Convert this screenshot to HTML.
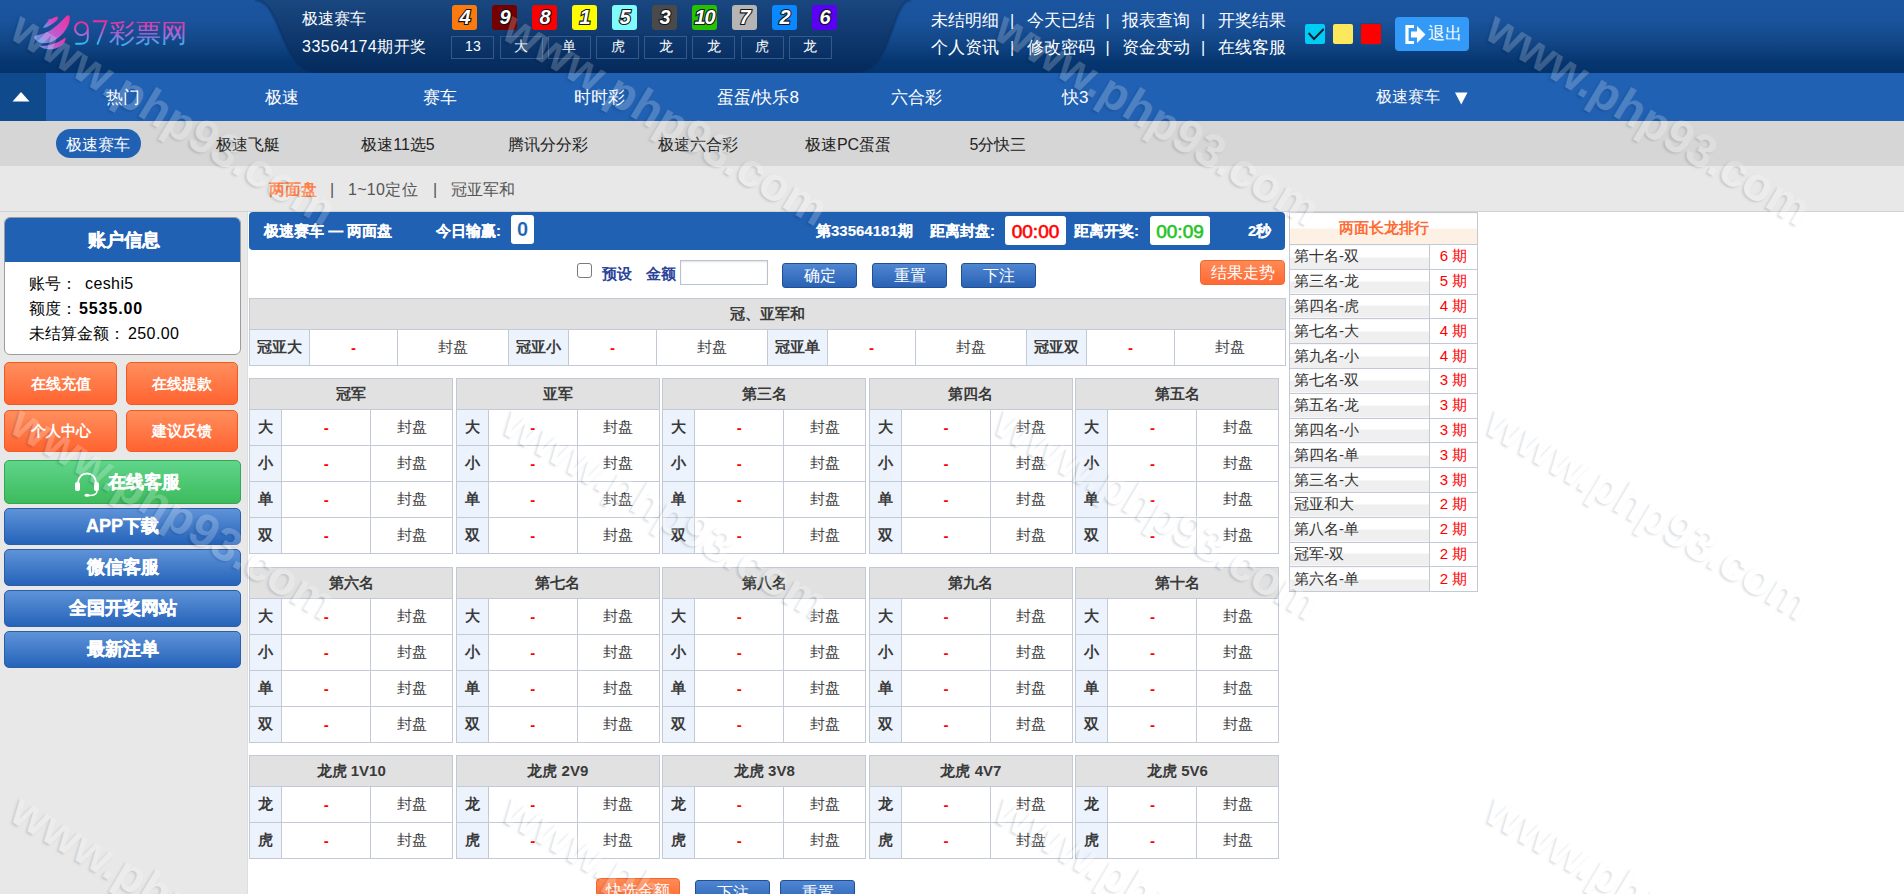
<!DOCTYPE html><html><head><meta charset="utf-8"><title>97彩票网</title><style>
*{margin:0;padding:0;box-sizing:border-box}
html,body{width:1904px;height:894px;overflow:hidden;background:#fff;font-family:"Liberation Sans",sans-serif;}
.ab{position:absolute;white-space:nowrap}
.hdr{position:absolute;left:0;top:0;width:1904px;height:73px}
.ball{position:absolute;top:5px;width:25px;height:25px;border-radius:3px;color:#fff;font:italic bold 20px/25px "Liberation Sans",sans-serif;text-align:center;
 -webkit-text-stroke:2.2px #151515;paint-order:stroke fill;text-shadow:0 0 1px rgba(0,0,0,.5);letter-spacing:-1px}
.rbox{position:absolute;top:36px;width:43px;height:23px;border:1px solid #35598a;color:#fff;font-size:14px;line-height:19px;text-align:center}
.lnk{position:absolute;color:#fff;font-size:16px;line-height:20px}
.nav{position:absolute;left:0;top:73px;width:1904px;height:48px;background:#2161b3}
.navi{position:absolute;top:0;height:48px;line-height:49px;color:#fff;font-size:17px;text-align:center;width:160px}
.sub{position:absolute;left:0;top:121px;width:1904px;height:45px;background:#d6d6d6}
.subi{position:absolute;top:0;height:45px;line-height:47px;color:#222;font-size:16px;text-align:center;width:150px}
.tabs{position:absolute;left:0;top:166px;width:1904px;height:46px;background:#e8e8e8;border-bottom:1px solid #d2d2d2}
.lcol{position:absolute;left:0;top:212px;width:248px;height:682px;background:#e8e8e8;border-right:1px solid #dedede}
.obtn{position:absolute;width:112px;height:42px;border-radius:5px;border:1px solid #f45a20;background:linear-gradient(#ff8f5e,#ff6330);color:#fff;font-weight:bold;font-size:15px;line-height:40px;text-align:center}
.bbtn{position:absolute;left:4px;width:237px;height:37px;border-radius:5px;border:1px solid #2a5ea8;background:linear-gradient(#5e93d8,#2563b9);color:#fff;font-weight:bold;font-size:18px;line-height:35px;text-align:center;-webkit-text-stroke:.4px #fff}
table{border-collapse:collapse;table-layout:fixed}
.bt td,.bt th{border:1px solid #c3cad5;text-align:center;font-size:15px;color:#3a3a3a}
.bt th{background:#e1e1e1;height:31px;font-weight:bold;-webkit-text-stroke:0}
.bt td{height:36px;background:#fff}
.bt td.l{background:#edf3fc;font-weight:bold;-webkit-text-stroke:0}
.bt td.o{color:#f00;font-weight:bold}
.sbtn{position:absolute;height:25px;border-radius:3px;border:1px solid #1f4f95;background:linear-gradient(#4f86d2,#2a62b4);color:#fff;font-size:16px;line-height:23px;text-align:center}
.wm{position:absolute;font:bold 47px/1 "Liberation Sans",sans-serif;color:#fff;opacity:.2;text-shadow:-1px 2px 2px rgba(0,0,0,.6);transform-origin:0 0;transform:rotate(31deg);white-space:nowrap;pointer-events:none}
</style></head><body>
<svg class="hdr" width="1904" height="73" viewBox="0 0 1904 73">
<defs>
<linearGradient id="hg" x1="0" y1="0" x2="0" y2="1"><stop offset="0" stop-color="#1b559f"/><stop offset=".28" stop-color="#1a539c"/><stop offset=".55" stop-color="#134889"/><stop offset=".85" stop-color="#063670"/><stop offset="1" stop-color="#04336c"/></linearGradient>
<linearGradient id="dg" x1="0" y1="0" x2="0" y2="1"><stop offset="0" stop-color="#1a4780"/><stop offset="1" stop-color="#042a5c"/></linearGradient>
<linearGradient id="lg" x1="0" y1="1" x2="1" y2="0"><stop offset="0" stop-color="#2fb6f5"/><stop offset=".5" stop-color="#b866d8"/><stop offset="1" stop-color="#f0309a"/></linearGradient>
<linearGradient id="tg" x1="0" y1="0" x2="0" y2="1" gradientUnits="objectBoundingBox"><stop offset="0" stop-color="#ee2c98"/><stop offset=".5" stop-color="#b060d0"/><stop offset="1" stop-color="#2cbdf8"/></linearGradient>
<linearGradient id="sg" x1="0" y1="1" x2="1" y2="0"><stop offset="0" stop-color="#4aa6f0"/><stop offset=".45" stop-color="#c05ad0"/><stop offset="1" stop-color="#f52d9b"/></linearGradient>
</defs>
<rect width="1904" height="73" fill="url(#hg)"/>
<path d="M255 0 C282 0 280 73 318 73 L856 73 C893 73 891 0 911 0 Z" fill="url(#dg)"/>
<path d="M255 0 C282 0 280 73 318 73" fill="none" stroke="#0a2e60" stroke-opacity=".35" stroke-width="3"/>
<path d="M856 73 C893 73 891 0 911 0" fill="none" stroke="#0a2e60" stroke-opacity=".35" stroke-width="3"/>
<g>
<path d="M34 37 C36 44 48 46 58 38 C66 32 71 22 69.5 16 C69 14.5 67 15.5 65 17.5 C58 25 50 32 42 34 C38 35 35 35.5 34 37 Z" fill="url(#sg)"/>
<path d="M43 28 C46 22 53 17 57 16.5 C59 17 58 20 55 22 C51 25 46 28 43 28 Z M47 20.5 L50.5 18.5 L50 21 Z" fill="url(#sg)"/>
<path d="M39 45.5 C44 50.5 55 51 62 45 C65 42 66 39 65.5 37.5 C60 42 52 45 45 45.7 C42 46 40 45.8 39 45.5 Z" fill="url(#sg)"/>
</g>
<g fill="none" stroke="url(#tg)" stroke-width="1.9" stroke-linecap="round">
<path d="M87.8 29 A6.4 6.4 0 1 1 87.8 28.2 L87.8 37.5 C87.8 41.5 85 43.8 81 43.8 L76 43.8"/>
<path d="M93.8 21.3 L106.3 21.3 L97.6 43.8"/>
</g>
<text x="108.5" y="42" font-family="Liberation Sans" font-size="25.5" fill="url(#tg)" style="font-weight:300">彩票网</text>
</svg>
<div class="lnk" style="left:302px;top:9px">极速赛车</div>
<div class="lnk" style="left:302px;top:37px;letter-spacing:.5px">33564174期开奖</div>
<div class="ball" style="left:452px;background:#fb7a10">4</div>
<div class="ball" style="left:492px;background:#740000">9</div>
<div class="ball" style="left:532px;background:#fc0000">8</div>
<div class="ball" style="left:572px;background:#fdfd00">1</div>
<div class="ball" style="left:612px;background:#80fbfb">5</div>
<div class="ball" style="left:652px;background:#4a4a4a">3</div>
<div class="ball" style="left:692px;background:#25c200">10</div>
<div class="ball" style="left:732px;background:#b5b5b5">7</div>
<div class="ball" style="left:772px;background:#0a88ff">2</div>
<div class="ball" style="left:812px;background:#5a00f5">6</div>
<div class="rbox" style="left:451.4px">13</div>
<div class="rbox" style="left:499.6px">大</div>
<div class="rbox" style="left:547.8px">单</div>
<div class="rbox" style="left:596.0px">虎</div>
<div class="rbox" style="left:644.2px">龙</div>
<div class="rbox" style="left:692.4px">龙</div>
<div class="rbox" style="left:740.6px">虎</div>
<div class="rbox" style="left:788.8px">龙</div>
<div class="lnk" style="left:931.0px;top:11px;font-size:17px">未结明细</div>
<div class="lnk" style="left:1010.0px;top:11px">|</div>
<div class="lnk" style="left:1026.5px;top:11px;font-size:17px">今天已结</div>
<div class="lnk" style="left:1105.5px;top:11px">|</div>
<div class="lnk" style="left:1122.0px;top:11px;font-size:17px">报表查询</div>
<div class="lnk" style="left:1201.0px;top:11px">|</div>
<div class="lnk" style="left:1217.5px;top:11px;font-size:17px">开奖结果</div>
<div class="lnk" style="left:931.0px;top:38px;font-size:17px">个人资讯</div>
<div class="lnk" style="left:1010.0px;top:38px">|</div>
<div class="lnk" style="left:1026.5px;top:38px;font-size:17px">修改密码</div>
<div class="lnk" style="left:1105.5px;top:38px">|</div>
<div class="lnk" style="left:1122.0px;top:38px;font-size:17px">资金变动</div>
<div class="lnk" style="left:1201.0px;top:38px">|</div>
<div class="lnk" style="left:1217.5px;top:38px;font-size:17px">在线客服</div>
<div class="ab" style="left:1305px;top:24px;width:20px;height:20px;background:#00cdf6;border-radius:2px"><svg width="20" height="20" viewBox="0 0 20 20"><path d="M3.6 9 L9 15 L18.7 5" fill="none" stroke="#0d1d2c" stroke-width="1.9"/></svg></div>
<div class="ab" style="left:1333px;top:24px;width:20px;height:20px;background:#fbe85c;border-radius:2px"></div>
<div class="ab" style="left:1361px;top:24px;width:20px;height:20px;background:#fe0000;border-radius:2px;box-shadow:0 0 0 1px #23467a"></div>
<div class="ab" style="left:1395px;top:17px;width:74px;height:34px;background:#339bf7;border-radius:4px"><svg style="position:absolute;left:10px;top:8px" width="22" height="19" viewBox="0 0 22 19"><path d="M9 1.5 H2 V17.5 H9" fill="none" stroke="#fff" stroke-width="3.2"/><path d="M6 6.5 H12 V1 L20.5 9.5 L12 18 V12.5 H6 Z" fill="#fff"/></svg><div class="lnk" style="left:33px;top:7px;font-size:17px">退出</div></div>
<div class="nav"><div class="ab" style="left:0;top:0;width:46px;height:48px;background:#0f4a8c"></div>
<svg class="ab" style="left:12px;top:19px" width="18" height="10" viewBox="0 0 18 10"><path d="M9 0 L17.5 9.5 L0.5 9.5 Z" fill="#fff"/></svg>
<div class="navi" style="left:42.8px">热门</div>
<div class="navi" style="left:201.6px">极速</div>
<div class="navi" style="left:360.3px">赛车</div>
<div class="navi" style="left:519.0px">时时彩</div>
<div class="navi" style="left:677.8px">蛋蛋/快乐8</div>
<div class="navi" style="left:836.5px">六合彩</div>
<div class="navi" style="left:995.3px">快3</div>
<div class="lnk" style="left:1376px;top:14px">极速赛车</div><svg class="ab" style="left:1455px;top:19px" width="13" height="13" viewBox="0 0 13 13"><path d="M0 0.5 H12.5 L6.25 12.5 Z" fill="#fff"/></svg>
</div>
<div class="sub">
<div class="ab" style="left:56px;top:8px;width:85px;height:29px;border-radius:15px;background:#2161b3"></div>
<div class="subi" style="left:23px;color:#fff">极速赛车</div>
<div class="subi" style="left:173px;color:#222">极速飞艇</div>
<div class="subi" style="left:323px;color:#222">极速11选5</div>
<div class="subi" style="left:473px;color:#222">腾讯分分彩</div>
<div class="subi" style="left:623px;color:#222">极速六合彩</div>
<div class="subi" style="left:773px;color:#222">极速PC蛋蛋</div>
<div class="subi" style="left:923px;color:#222">5分快三</div>
</div>
<div class="tabs">
<div class="lnk" style="left:269px;top:14px;color:#fd7d45;font-weight:bold">两面盘</div>
<div class="lnk" style="left:330px;top:14px;color:#555">|</div>
<div class="lnk" style="left:348px;top:14px;color:#555;letter-spacing:.3px">1~10定位</div>
<div class="lnk" style="left:433px;top:14px;color:#555">|</div>
<div class="lnk" style="left:451px;top:14px;color:#555">冠亚军和</div>
</div>
<div class="lcol"></div>
<div class="ab" style="left:4px;top:217px;width:237px;height:138px;border:1px solid #9c9c9c;border-radius:6px;background:#fff;overflow:hidden">
<div class="ab" style="left:0;top:0;width:237px;height:44px;background:#2161b3;color:#fff;font-weight:bold;font-size:18px;line-height:44px;text-align:center;-webkit-text-stroke:.4px #fff">账户信息</div>
<div class="lnk" style="left:24px;top:56px;color:#000">账号：</div><div class="lnk" style="left:80px;top:56px;color:#000;letter-spacing:.4px">ceshi5</div>
<div class="lnk" style="left:24px;top:81px;color:#000">额度：</div><div class="lnk" style="left:74px;top:81px;color:#000;font-weight:bold;letter-spacing:.9px">5535.00</div>
<div class="lnk" style="left:24px;top:106px;color:#000">未结算金额：</div><div class="lnk" style="left:123px;top:106px;color:#000;letter-spacing:.4px">250.00</div>
</div>
<div class="obtn" style="left:4px;top:362px;width:113px;height:43px;line-height:41px">在线充值</div>
<div class="obtn" style="left:126px;top:362px;width:112px;height:43px;line-height:41px">在线提款</div>
<div class="obtn" style="left:4px;top:410px;width:113px;height:42px;line-height:40px">个人中心</div>
<div class="obtn" style="left:126px;top:410px;width:112px;height:42px;line-height:40px">建议反馈</div>
<div class="ab" style="left:4px;top:460px;width:237px;height:44px;border-radius:5px;border:1px solid #36a655;background:linear-gradient(#5fd58a,#3dbb5d);color:#fff;font-weight:bold;font-size:18px;line-height:42px;text-align:center;-webkit-text-stroke:.4px #fff">
<svg style="position:absolute;left:69px;top:11px" width="26" height="25" viewBox="0 0 26 25"><path d="M4 12 C4 5 8 1.5 13 1.5 C18 1.5 22 5 22 12" fill="none" stroke="#fff" stroke-width="1.8"/><rect x="1" y="10" width="5" height="9" rx="2" fill="#fff"/><rect x="20" y="10" width="5" height="9" rx="2" fill="#fff"/><path d="M23 19 C23 22 20 23.5 15 23.5" fill="none" stroke="#fff" stroke-width="1.5"/><ellipse cx="13" cy="23.3" rx="2.6" ry="1.5" fill="#fff"/></svg>
<span style="position:absolute;left:103px;top:0">在线客服</span></div>
<div class="bbtn" style="top:508px">APP下载</div>
<div class="bbtn" style="top:549px">微信客服</div>
<div class="bbtn" style="top:590px">全国开奖网站</div>
<div class="bbtn" style="top:631px">最新注单</div>
<div class="ab" style="left:249px;top:212px;width:1036px;height:38px;background:#2161b3;border-radius:4px;color:#fff;font-weight:bold;font-size:15px;-webkit-text-stroke:.15px #fff">
<div class="ab" style="left:15px;top:10px;line-height:17px">极速赛车 — 两面盘</div>
<div class="ab" style="left:187px;top:10px;line-height:17px">今日输赢:</div>
<div class="ab" style="left:262px;top:3px;width:23px;height:29px;background:#fff;border-radius:3px;color:#2161b3;font-size:20px;line-height:29px;text-align:center">0</div>
<div class="ab" style="left:567px;top:10px;line-height:17px">第33564181期</div>
<div class="ab" style="left:681px;top:10px;line-height:17px">距离封盘:</div>
<div class="ab" style="left:756px;top:4px;width:61px;height:29px;padding-top:1px;background:#fff;border-radius:3px;color:#f00;font-weight:normal;font-size:19px;line-height:29px;text-align:center;-webkit-text-stroke:.6px #f00">00:00</div>
<div class="ab" style="left:825px;top:10px;line-height:17px">距离开奖:</div>
<div class="ab" style="left:901px;top:4px;width:60px;height:29px;padding-top:1px;background:#fff;border-radius:3px;color:#22c422;font-weight:normal;font-size:19px;line-height:29px;text-align:center;-webkit-text-stroke:.6px #22c422">00:09</div>
<div class="ab" style="left:999px;top:10px;line-height:17px">2秒</div>
</div>
<div class="ab" style="left:577px;top:263px;width:15px;height:15px;border:1.5px solid #7a7a7a;border-radius:3px;background:#fff"></div>
<div class="ab" style="left:602px;top:265px;font-size:15px;font-weight:bold;color:#2c4499;line-height:17px">预设</div>
<div class="ab" style="left:646px;top:265px;font-size:15px;font-weight:bold;color:#2c4499;line-height:17px">金额</div>
<div class="ab" style="left:680px;top:260px;width:88px;height:25px;border:1px solid #b9c3d0;background:#fff;box-shadow:inset 0 1px 2px rgba(0,0,0,.12)"></div>
<div class="sbtn" style="left:782px;top:263px;width:75px">确定</div>
<div class="sbtn" style="left:872px;top:263px;width:75px">重置</div>
<div class="sbtn" style="left:961px;top:263px;width:75px">下注</div>
<div class="ab" style="left:1200px;top:260px;width:85px;height:25px;border-radius:4px;background:linear-gradient(#ff8a55,#ff6a35);border:1px solid #f0682f;color:#fff;font-size:16px;line-height:23px;text-align:center">结果走势</div>
<table class="bt ab" style="left:249px;top:298px;width:1036px"><colgroup><col style="width:60px"><col style="width:88px"><col style="width:111px"><col style="width:60px"><col style="width:88px"><col style="width:111px"><col style="width:60px"><col style="width:88px"><col style="width:111px"><col style="width:60px"><col style="width:88px"><col style="width:111px"></colgroup>
<tr><th colspan="12">冠、亚军和</th></tr><tr>
<td class="l">冠亚大</td><td class="o">-</td><td>封盘</td>
<td class="l">冠亚小</td><td class="o">-</td><td>封盘</td>
<td class="l">冠亚单</td><td class="o">-</td><td>封盘</td>
<td class="l">冠亚双</td><td class="o">-</td><td>封盘</td>
</tr></table>
<table class="bt ab" style="left:249.2px;top:378px;width:203px"><colgroup><col style="width:32px"><col style="width:89px"><col style="width:82px"></colgroup>
<tr><th colspan="3">冠军</th></tr>
<tr><td class="l">大</td><td class="o">-</td><td>封盘</td></tr>
<tr><td class="l">小</td><td class="o">-</td><td>封盘</td></tr>
<tr><td class="l">单</td><td class="o">-</td><td>封盘</td></tr>
<tr><td class="l">双</td><td class="o">-</td><td>封盘</td></tr>
</table>
<table class="bt ab" style="left:249.2px;top:567px;width:203px"><colgroup><col style="width:32px"><col style="width:89px"><col style="width:82px"></colgroup>
<tr><th colspan="3">第六名</th></tr>
<tr><td class="l">大</td><td class="o">-</td><td>封盘</td></tr>
<tr><td class="l">小</td><td class="o">-</td><td>封盘</td></tr>
<tr><td class="l">单</td><td class="o">-</td><td>封盘</td></tr>
<tr><td class="l">双</td><td class="o">-</td><td>封盘</td></tr>
</table>
<table class="bt ab" style="left:249.2px;top:755px;width:203px"><colgroup><col style="width:32px"><col style="width:89px"><col style="width:82px"></colgroup>
<tr><th colspan="3">龙虎 1V10</th></tr>
<tr><td class="l">龙</td><td class="o">-</td><td>封盘</td></tr>
<tr><td class="l">虎</td><td class="o">-</td><td>封盘</td></tr>
</table>
<table class="bt ab" style="left:455.8px;top:378px;width:203px"><colgroup><col style="width:32px"><col style="width:89px"><col style="width:82px"></colgroup>
<tr><th colspan="3">亚军</th></tr>
<tr><td class="l">大</td><td class="o">-</td><td>封盘</td></tr>
<tr><td class="l">小</td><td class="o">-</td><td>封盘</td></tr>
<tr><td class="l">单</td><td class="o">-</td><td>封盘</td></tr>
<tr><td class="l">双</td><td class="o">-</td><td>封盘</td></tr>
</table>
<table class="bt ab" style="left:455.8px;top:567px;width:203px"><colgroup><col style="width:32px"><col style="width:89px"><col style="width:82px"></colgroup>
<tr><th colspan="3">第七名</th></tr>
<tr><td class="l">大</td><td class="o">-</td><td>封盘</td></tr>
<tr><td class="l">小</td><td class="o">-</td><td>封盘</td></tr>
<tr><td class="l">单</td><td class="o">-</td><td>封盘</td></tr>
<tr><td class="l">双</td><td class="o">-</td><td>封盘</td></tr>
</table>
<table class="bt ab" style="left:455.8px;top:755px;width:203px"><colgroup><col style="width:32px"><col style="width:89px"><col style="width:82px"></colgroup>
<tr><th colspan="3">龙虎 2V9</th></tr>
<tr><td class="l">龙</td><td class="o">-</td><td>封盘</td></tr>
<tr><td class="l">虎</td><td class="o">-</td><td>封盘</td></tr>
</table>
<table class="bt ab" style="left:662.3px;top:378px;width:203px"><colgroup><col style="width:32px"><col style="width:89px"><col style="width:82px"></colgroup>
<tr><th colspan="3">第三名</th></tr>
<tr><td class="l">大</td><td class="o">-</td><td>封盘</td></tr>
<tr><td class="l">小</td><td class="o">-</td><td>封盘</td></tr>
<tr><td class="l">单</td><td class="o">-</td><td>封盘</td></tr>
<tr><td class="l">双</td><td class="o">-</td><td>封盘</td></tr>
</table>
<table class="bt ab" style="left:662.3px;top:567px;width:203px"><colgroup><col style="width:32px"><col style="width:89px"><col style="width:82px"></colgroup>
<tr><th colspan="3">第八名</th></tr>
<tr><td class="l">大</td><td class="o">-</td><td>封盘</td></tr>
<tr><td class="l">小</td><td class="o">-</td><td>封盘</td></tr>
<tr><td class="l">单</td><td class="o">-</td><td>封盘</td></tr>
<tr><td class="l">双</td><td class="o">-</td><td>封盘</td></tr>
</table>
<table class="bt ab" style="left:662.3px;top:755px;width:203px"><colgroup><col style="width:32px"><col style="width:89px"><col style="width:82px"></colgroup>
<tr><th colspan="3">龙虎 3V8</th></tr>
<tr><td class="l">龙</td><td class="o">-</td><td>封盘</td></tr>
<tr><td class="l">虎</td><td class="o">-</td><td>封盘</td></tr>
</table>
<table class="bt ab" style="left:868.9px;top:378px;width:203px"><colgroup><col style="width:32px"><col style="width:89px"><col style="width:82px"></colgroup>
<tr><th colspan="3">第四名</th></tr>
<tr><td class="l">大</td><td class="o">-</td><td>封盘</td></tr>
<tr><td class="l">小</td><td class="o">-</td><td>封盘</td></tr>
<tr><td class="l">单</td><td class="o">-</td><td>封盘</td></tr>
<tr><td class="l">双</td><td class="o">-</td><td>封盘</td></tr>
</table>
<table class="bt ab" style="left:868.9px;top:567px;width:203px"><colgroup><col style="width:32px"><col style="width:89px"><col style="width:82px"></colgroup>
<tr><th colspan="3">第九名</th></tr>
<tr><td class="l">大</td><td class="o">-</td><td>封盘</td></tr>
<tr><td class="l">小</td><td class="o">-</td><td>封盘</td></tr>
<tr><td class="l">单</td><td class="o">-</td><td>封盘</td></tr>
<tr><td class="l">双</td><td class="o">-</td><td>封盘</td></tr>
</table>
<table class="bt ab" style="left:868.9px;top:755px;width:203px"><colgroup><col style="width:32px"><col style="width:89px"><col style="width:82px"></colgroup>
<tr><th colspan="3">龙虎 4V7</th></tr>
<tr><td class="l">龙</td><td class="o">-</td><td>封盘</td></tr>
<tr><td class="l">虎</td><td class="o">-</td><td>封盘</td></tr>
</table>
<table class="bt ab" style="left:1075.4px;top:378px;width:203px"><colgroup><col style="width:32px"><col style="width:89px"><col style="width:82px"></colgroup>
<tr><th colspan="3">第五名</th></tr>
<tr><td class="l">大</td><td class="o">-</td><td>封盘</td></tr>
<tr><td class="l">小</td><td class="o">-</td><td>封盘</td></tr>
<tr><td class="l">单</td><td class="o">-</td><td>封盘</td></tr>
<tr><td class="l">双</td><td class="o">-</td><td>封盘</td></tr>
</table>
<table class="bt ab" style="left:1075.4px;top:567px;width:203px"><colgroup><col style="width:32px"><col style="width:89px"><col style="width:82px"></colgroup>
<tr><th colspan="3">第十名</th></tr>
<tr><td class="l">大</td><td class="o">-</td><td>封盘</td></tr>
<tr><td class="l">小</td><td class="o">-</td><td>封盘</td></tr>
<tr><td class="l">单</td><td class="o">-</td><td>封盘</td></tr>
<tr><td class="l">双</td><td class="o">-</td><td>封盘</td></tr>
</table>
<table class="bt ab" style="left:1075.4px;top:755px;width:203px"><colgroup><col style="width:32px"><col style="width:89px"><col style="width:82px"></colgroup>
<tr><th colspan="3">龙虎 5V6</th></tr>
<tr><td class="l">龙</td><td class="o">-</td><td>封盘</td></tr>
<tr><td class="l">虎</td><td class="o">-</td><td>封盘</td></tr>
</table>
<div class="ab" style="left:596px;top:878px;width:84px;height:25px;border-radius:4px;background:linear-gradient(#ff8a55,#ff6a35);border:1px solid #f0682f;color:#fff;font-size:16px;line-height:23px;text-align:center">快选金额</div>
<div class="sbtn" style="left:695px;top:880px;width:75px">下注</div>
<div class="sbtn" style="left:780px;top:880px;width:75px">重置</div>
<table class="ab" style="left:1289px;top:212px;width:188px;border-collapse:collapse"><colgroup><col style="width:140px"><col style="width:48px"></colgroup>
<tr><td colspan="2" style="border:1px solid #c3cad5;height:32px;background:linear-gradient(#fff 50%,#fdf1e6 50%);color:#fd6c35;font-weight:bold;font-size:15px;text-align:center">两面长龙排行</td></tr>
<tr><td style="border:1px solid #c3cad5;height:24.8px;background:linear-gradient(#fff 50%,#efefef 50%);color:#333;font-size:15px;padding-left:4px">第十名-双</td><td style="border:1px solid #c3cad5;color:#f00;font-size:15px;text-align:center">6 期</td></tr>
<tr><td style="border:1px solid #c3cad5;height:24.8px;background:linear-gradient(#fff 50%,#efefef 50%);color:#333;font-size:15px;padding-left:4px">第三名-龙</td><td style="border:1px solid #c3cad5;color:#f00;font-size:15px;text-align:center">5 期</td></tr>
<tr><td style="border:1px solid #c3cad5;height:24.8px;background:linear-gradient(#fff 50%,#efefef 50%);color:#333;font-size:15px;padding-left:4px">第四名-虎</td><td style="border:1px solid #c3cad5;color:#f00;font-size:15px;text-align:center">4 期</td></tr>
<tr><td style="border:1px solid #c3cad5;height:24.8px;background:linear-gradient(#fff 50%,#efefef 50%);color:#333;font-size:15px;padding-left:4px">第七名-大</td><td style="border:1px solid #c3cad5;color:#f00;font-size:15px;text-align:center">4 期</td></tr>
<tr><td style="border:1px solid #c3cad5;height:24.8px;background:linear-gradient(#fff 50%,#efefef 50%);color:#333;font-size:15px;padding-left:4px">第九名-小</td><td style="border:1px solid #c3cad5;color:#f00;font-size:15px;text-align:center">4 期</td></tr>
<tr><td style="border:1px solid #c3cad5;height:24.8px;background:linear-gradient(#fff 50%,#efefef 50%);color:#333;font-size:15px;padding-left:4px">第七名-双</td><td style="border:1px solid #c3cad5;color:#f00;font-size:15px;text-align:center">3 期</td></tr>
<tr><td style="border:1px solid #c3cad5;height:24.8px;background:linear-gradient(#fff 50%,#efefef 50%);color:#333;font-size:15px;padding-left:4px">第五名-龙</td><td style="border:1px solid #c3cad5;color:#f00;font-size:15px;text-align:center">3 期</td></tr>
<tr><td style="border:1px solid #c3cad5;height:24.8px;background:linear-gradient(#fff 50%,#efefef 50%);color:#333;font-size:15px;padding-left:4px">第四名-小</td><td style="border:1px solid #c3cad5;color:#f00;font-size:15px;text-align:center">3 期</td></tr>
<tr><td style="border:1px solid #c3cad5;height:24.8px;background:linear-gradient(#fff 50%,#efefef 50%);color:#333;font-size:15px;padding-left:4px">第四名-单</td><td style="border:1px solid #c3cad5;color:#f00;font-size:15px;text-align:center">3 期</td></tr>
<tr><td style="border:1px solid #c3cad5;height:24.8px;background:linear-gradient(#fff 50%,#efefef 50%);color:#333;font-size:15px;padding-left:4px">第三名-大</td><td style="border:1px solid #c3cad5;color:#f00;font-size:15px;text-align:center">3 期</td></tr>
<tr><td style="border:1px solid #c3cad5;height:24.8px;background:linear-gradient(#fff 50%,#efefef 50%);color:#333;font-size:15px;padding-left:4px">冠亚和大</td><td style="border:1px solid #c3cad5;color:#f00;font-size:15px;text-align:center">2 期</td></tr>
<tr><td style="border:1px solid #c3cad5;height:24.8px;background:linear-gradient(#fff 50%,#efefef 50%);color:#333;font-size:15px;padding-left:4px">第八名-单</td><td style="border:1px solid #c3cad5;color:#f00;font-size:15px;text-align:center">2 期</td></tr>
<tr><td style="border:1px solid #c3cad5;height:24.8px;background:linear-gradient(#fff 50%,#efefef 50%);color:#333;font-size:15px;padding-left:4px">冠军-双</td><td style="border:1px solid #c3cad5;color:#f00;font-size:15px;text-align:center">2 期</td></tr>
<tr><td style="border:1px solid #c3cad5;height:24.8px;background:linear-gradient(#fff 50%,#efefef 50%);color:#333;font-size:15px;padding-left:4px">第六名-单</td><td style="border:1px solid #c3cad5;color:#f00;font-size:15px;text-align:center">2 期</td></tr>
</table>
<div class="wm" style="left:28px;top:3px">www.php93.com</div>
<div class="wm" style="left:520px;top:3px">www.php93.com</div>
<div class="wm" style="left:1012px;top:3px">www.php93.com</div>
<div class="wm" style="left:1503px;top:3px">www.php93.com</div>
<div class="wm" style="left:28px;top:397px">www.php93.com</div>
<div class="wm" style="left:520px;top:397px">www.php93.com</div>
<div class="wm" style="left:1012px;top:397px">www.php93.com</div>
<div class="wm" style="left:1503px;top:397px">www.php93.com</div>
<div class="wm" style="left:28px;top:785px">www.php93.com</div>
<div class="wm" style="left:520px;top:785px">www.php93.com</div>
<div class="wm" style="left:1012px;top:785px">www.php93.com</div>
<div class="wm" style="left:1503px;top:785px">www.php93.com</div>
</body></html>
